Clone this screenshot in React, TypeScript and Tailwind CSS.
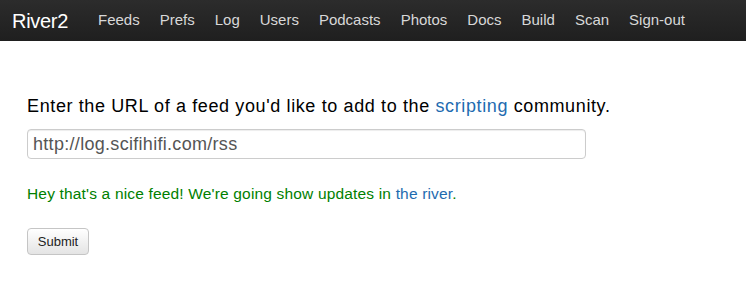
const navItems = ["Feeds", "Prefs", "Log", "Users", "Podcasts", "Photos", "Docs", "Build", "Scan", "Sign-out"];

export default function App() {
  return (
    <div className="min-h-screen bg-white font-['Liberation_Sans',Arial,sans-serif]">
      {/* Top bar */}
      <header className="h-[41px] bg-gradient-to-b from-[#2c2c2c] to-[#1f1f1f] flex items-center">
        <a className="ml-[12px] text-[20px] text-white tracking-[-0.3px]">River2</a>
        <nav className="flex ml-[20px]">
          {navItems.map((item) => (
            <a key={item} className="px-[10px] text-[15px] text-[#d8d8d8]">
              {item}
            </a>
          ))}
        </nav>
      </header>

      <main className="pl-[27px] pt-[55px]">
        <p className="text-[18px] text-black leading-[20px] tracking-[0.62px]">
          Enter the URL of a feed you'd like to add to the{" "}
          <a className="text-[#1e6bb0]">scripting</a> community.
        </p>
        <input
          className="mt-[13px] w-[559px] h-[30px] px-[5px] border border-[#cccccc] rounded-[4px] text-[18px] tracking-[0.3px] text-[#555] shadow-[inset_0_1px_1px_rgba(0,0,0,0.075)] outline-none"
          defaultValue="http://log.scifihifi.com/rss"
        />
        <p className="mt-[25px] text-[15.5px] text-[#008000] leading-[20px] tracking-[0.17px]">
          Hey that's a nice feed! We're going show updates in{" "}
          <a className="text-[#1e6bb0]">the river</a>.
        </p>
        <button className="mt-[24px] w-[62px] h-[27px] border border-[#c5c5c5] rounded-[4px] bg-gradient-to-b from-[#ffffff] to-[#e4e4e4] text-[13px] text-[#222]">
          Submit
        </button>
      </main>
    </div>
  );
}
